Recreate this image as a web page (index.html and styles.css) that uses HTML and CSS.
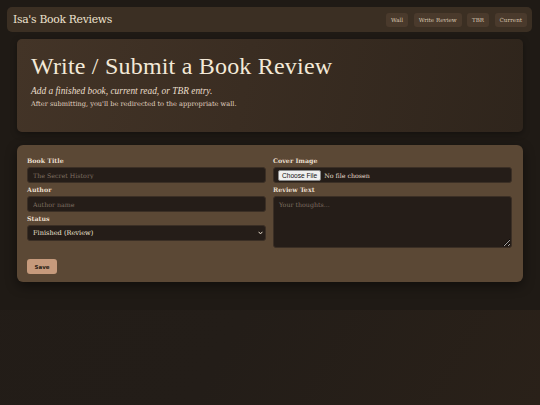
FILE: index.html
```html
<!DOCTYPE html>
<html lang="en">
<head>
<meta charset="utf-8">
<title>Write / Submit a Book Review</title>
<link rel="stylesheet" href="styles.css">
</head>
<body>
<div class="page">
  <header class="topbar">
    <div class="brand">Isa's Book Reviews</div>
    <nav class="nav">
      <a class="nav-link" href="#">Wall</a>
      <a class="nav-link" href="#">Write Review</a>
      <a class="nav-link" href="#">TBR</a>
      <a class="nav-link" href="#">Current</a>
    </nav>
  </header>
  <main class="main">
    <section class="hero">
      <h1 class="hero-title">Write / Submit a Book Review</h1>
      <p class="hero-sub">Add a finished book, current read, or TBR entry.</p>
      <p class="hero-note">After submitting, you'll be redirected to the appropriate wall.</p>
    </section>
    <form class="card">
      <div class="grid">
        <div class="col">
          <label class="field">
            <span class="label">Book Title</span>
            <input class="control" type="text" placeholder="The Secret History">
          </label>
          <label class="field">
            <span class="label">Author</span>
            <input class="control" type="text" placeholder="Author name">
          </label>
          <label class="field">
            <span class="label">Status</span>
            <span class="select-wrap">
              <select class="control select">
                <option>Finished (Review)</option>
                <option>Currently Reading</option>
                <option>TBR</option>
              </select>
              <svg class="chev" width="5" height="4" viewBox="0 0 5 4" aria-hidden="true"><path d="M0.6 0.8 L2.5 2.9 L4.4 0.8" fill="none" stroke="#e8dccb" stroke-width="1"/></svg>
            </span>
          </label>
        </div>
        <div class="col">
          <label class="field">
            <span class="label">Cover Image</span>
            <span class="control file-wrap"><input class="file" type="file"></span>
          </label>
          <label class="field">
            <span class="label">Review Text</span>
            <textarea class="control area" placeholder="Your thoughts..."></textarea>
          </label>
        </div>
      </div>
      <button class="save" type="button">Save</button>
    </form>
  </main>
</div>
</body>
</html>
```
FILE: styles.css
```css
html, body {
  margin: 0;
  padding: 0;
}
body {
  background: linear-gradient(120deg, #221c17 0%, #231d18 55%, #2a2119 100%);
  min-height: 405px;
  font-family: "DejaVu Serif", "Liberation Serif", serif;
  color: #efe4d3;
}
.page {
  background: #1f1a15;
  padding: 7px 0 28px;
}
.topbar {
  margin: 0 8px 0 7px;
  height: 25px;
  background: #3b2f23;
  border-radius: 5px;
  display: flex;
  align-items: center;
  justify-content: space-between;
  padding: 0 5px 0 6px;
}
.brand {
  font-size: 10.8px;
  letter-spacing: -0.3px;
  color: #eee2cf;
}
.nav {
  display: flex;
  gap: 5.5px;
}
.nav-link {
  font-size: 5.6px;
  color: #d8c6b0;
  text-decoration: none;
  background: #4a3a2c;
  border-radius: 3px;
  padding: 3px 5px;
  line-height: 8px;
}
.main {
  padding: 7px 17px 0;
}
.hero {
  background: linear-gradient(100deg, #433427 0%, #3a2d22 45%, #2f251c 100%);
  border-radius: 5px;
  height: 93px;
  box-sizing: border-box;
  padding: 13px 14px 0;
  box-shadow: 0 2px 6px rgba(0,0,0,0.35);
}
.hero-title {
  margin: 0;
  font-family: "Liberation Serif", serif;
  font-weight: 400;
  font-size: 24px;
  line-height: 28px;
  letter-spacing: 0.2px;
  color: #f3e9d8;
}
.hero-sub {
  margin: 5px 0 0;
  font-family: "Liberation Serif", serif;
  font-style: italic;
  font-size: 9.4px;
  line-height: 12px;
  color: #eadfcc;
}
.hero-note {
  margin: 3px 0 0;
  font-size: 6.6px;
  line-height: 9px;
  color: #e0d3c0;
}
.card {
  margin-top: 13px;
  background: #5b4835;
  border-radius: 6px;
  padding: 12px 11px 8px 10px;
  box-shadow: 0 4px 12px rgba(0,0,0,0.45);
  height: 137px;
  box-sizing: border-box;
}
.grid {
  display: grid;
  grid-template-columns: 1fr 1fr;
  column-gap: 7px;
}
.col {
  display: flex;
  flex-direction: column;
  gap: 3px;
}
.field {
  display: flex;
  flex-direction: column;
  gap: 2px;
}
.label {
  font-size: 6.3px;
  line-height: 8px;
  font-weight: 700;
  color: #eadfcd;
}
.control {
  display: block;
  box-sizing: border-box;
  height: 16px;
  width: 100%;
  background: #251d18;
  border: 1px solid #3b2f25;
  border-radius: 3px;
  color: #eadfcd;
  font-family: "DejaVu Serif", serif;
  font-size: 6.3px;
  padding: 0 5px;
  outline: none;
  margin: 0;
}
.control::placeholder {
  color: #7f7062;
}
.select-wrap {
  position: relative;
  display: block;
  height: 16px;
}
.select {
  appearance: none;
  -webkit-appearance: none;
  color: #f0e6d6;
  font-size: 6.6px;
  padding: 0 5px;
}
.chev {
  position: absolute;
  right: 3px;
  top: 6px;
  pointer-events: none;
}
.file-wrap {
  display: flex;
  align-items: center;
  padding: 0 4px;
}
.file {
  font-family: "DejaVu Serif", serif;
  font-size: 6.3px;
  color: #eadfcd;
}
.file::file-selector-button {
  font-family: "Liberation Sans", sans-serif;
  font-size: 6.6px;
  padding: 1px 3px;
  background: #efefef;
  border: 1px solid #8a8a8a;
  border-radius: 2px;
  color: #111;
  margin-right: 3px;
}
.area {
  height: 52px;
  padding: 4px 5px;
  resize: vertical;
}
.save {
  margin-top: 11px;
  background: #c69a7c;
  border: none;
  border-radius: 3px;
  width: 30px;
  height: 15px;
  font-family: "DejaVu Sans", sans-serif;
  font-weight: 700;
  font-size: 5.5px;
  color: #2a1d14;
  padding: 0;
}
```
